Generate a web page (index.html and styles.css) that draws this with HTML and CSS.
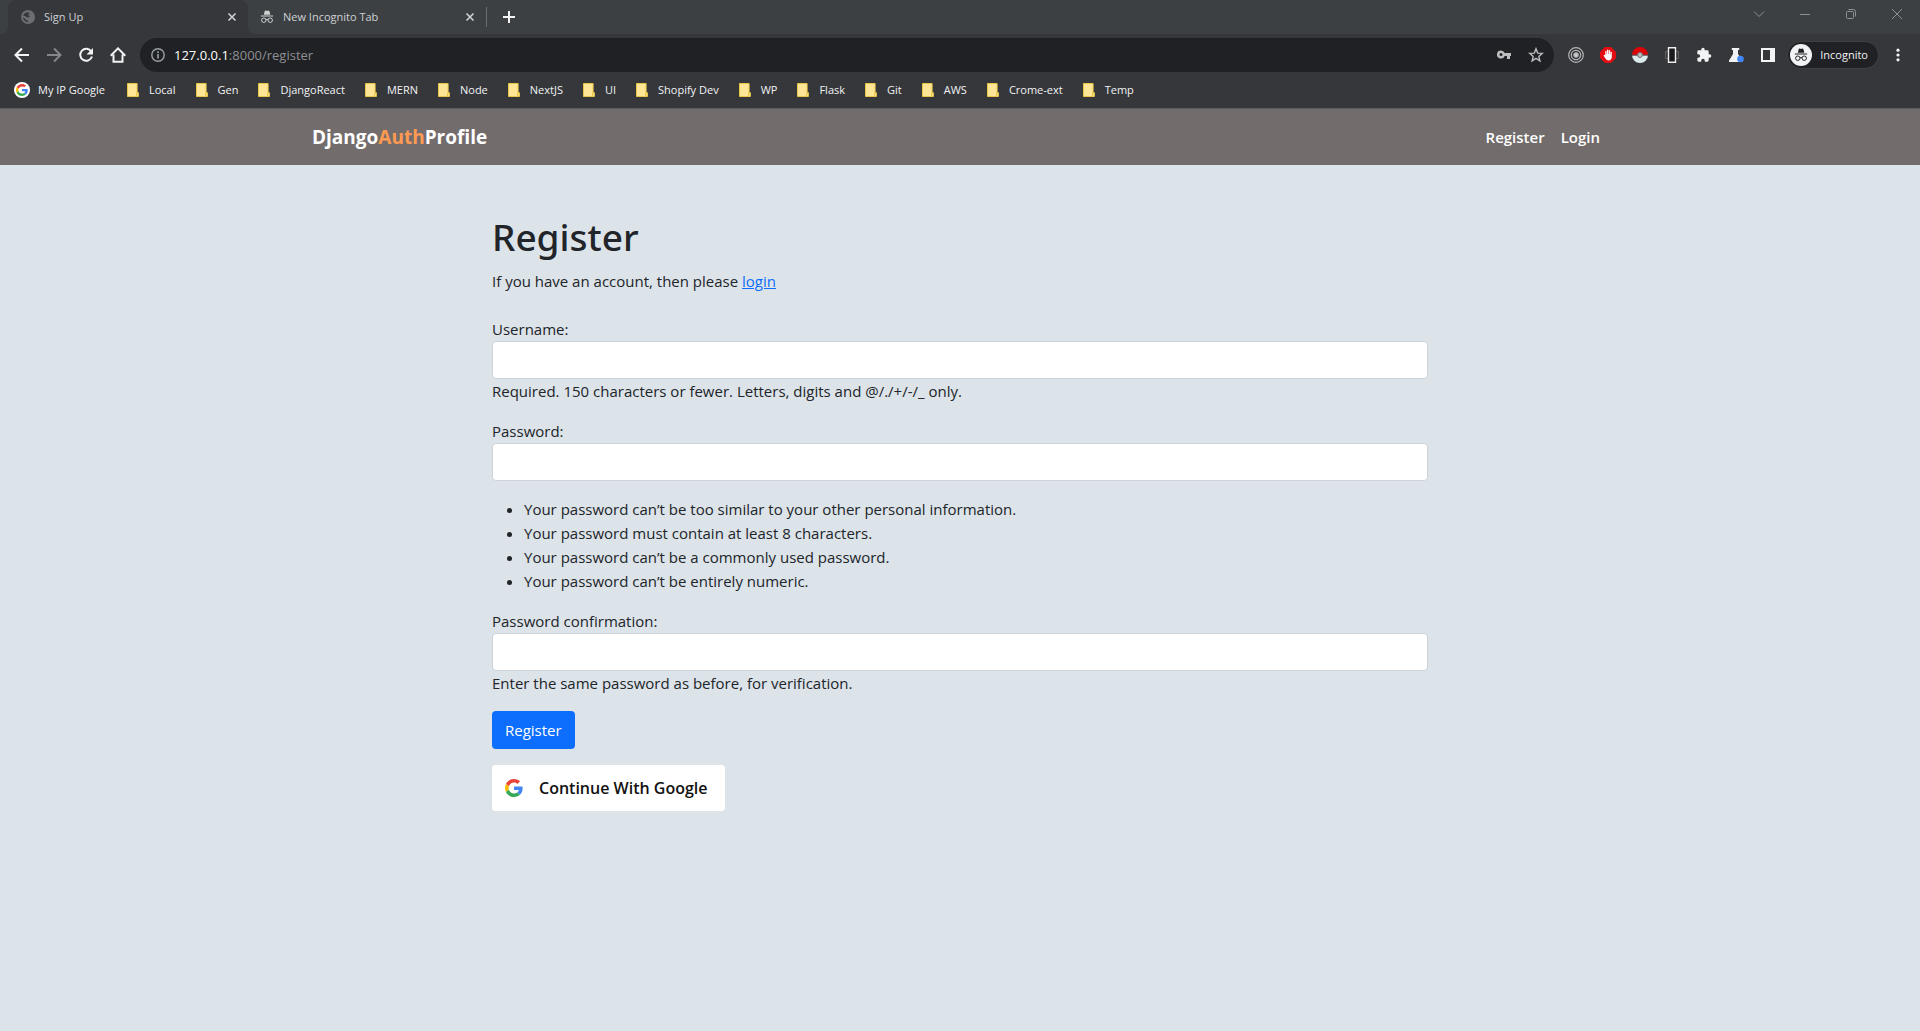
FILE: index.html
```html
<!DOCTYPE html>
<html lang="en">
<head>
<meta charset="utf-8">
<meta name="viewport" content="width=device-width, initial-scale=1">
<title>Sign Up</title>
<link rel="stylesheet" href="styles.css">
</head>
<body>
<svg class="sprite" aria-hidden="true">
  <symbol id="close" viewBox="0 0 10 10"><path d="M1.5 1.5l7 7M8.5 1.5l-7 7" fill="none" stroke="currentColor" stroke-width="1.6"/></symbol>
  <symbol id="folder" viewBox="0 0 12 14"><path d="M.5.5h9.6v9.2h1.3v3.8H.5z" fill="#ffe596" stroke="#e8c648"/><path d="M9.5 13.5v-3.2h2" fill="none" stroke="#e8c648"/></symbol>
  <symbol id="google" viewBox="0 0 48 48"><path fill="#EA4335" d="M24 9.5c3.54 0 6.71 1.22 9.21 3.6l6.85-6.85C35.9 2.38 30.47 0 24 0 14.62 0 6.51 5.38 2.56 13.22l7.98 6.19C12.43 13.72 17.74 9.5 24 9.5z"/><path fill="#4285F4" d="M46.98 24.55c0-1.57-.15-3.09-.38-4.55H24v9.02h12.94c-.58 2.96-2.26 5.48-4.78 7.18l7.73 6c4.51-4.18 7.09-10.36 7.09-17.65z"/><path fill="#FBBC05" d="M10.53 28.59c-.48-1.45-.76-2.99-.76-4.59s.27-3.14.76-4.59l-7.98-6.19C.92 16.46 0 20.12 0 24s.92 7.54 2.56 10.78l7.97-6.19z"/><path fill="#34A853" d="M24 48c6.48 0 11.93-2.13 15.89-5.81l-7.73-6c-2.15 1.45-4.92 2.3-8.16 2.3-6.26 0-11.57-4.22-13.47-9.91l-7.98 6.19C6.51 42.62 14.62 48 24 48z"/></symbol>
  <symbol id="incognito" viewBox="0 0 24 24"><path d="M17.1 5l-1.3-3.3c-.3-.7-1-1-1.700-.8L12 1.500 9.900.900c-.7-.2-1.400.1-1.700.8L6.500 8h11zM1.500 9.500h21v1.800h-21z" fill="currentColor"/><g fill="none" stroke="currentColor" stroke-width="1.700"><circle cx="6.500" cy="17.500" r="3.800"/><circle cx="17.500" cy="17.500" r="3.800"/><path d="M10.200 16.800c1.200-.8 2.400-.8 3.600 0"/></g></symbol>
</svg>

<header class="browser">
  <div class="tabs">
    <div class="tab tab-active">
      <svg class="tab-icon" viewBox="0 0 14 14"><circle cx="7" cy="7" r="7" fill="#6b6e72"/><path d="M6.500 2.200C4.300 2.500 2.500 4 2.200 5.800l2 .2 1.300 1.300h2.700L9 6 7.200 5.200l.6-1.400 1.400-.6zM1.800 7.500c.5 2.500 2.500 4.500 5 4.700l.5-1.700H5.500L4.300 8.700z" fill="#36373b"/></svg>
      <span class="tab-title">Sign Up</span>
      <button class="tab-close" aria-label="Close Sign Up"><svg width="10" height="10"><use href="#close"/></svg></button>
    </div>
    <div class="tab">
      <svg class="tab-icon"><use href="#incognito"/></svg>
      <span class="tab-title">New Incognito Tab</span>
      <button class="tab-close" aria-label="Close New Incognito Tab"><svg width="10" height="10"><use href="#close"/></svg></button>
    </div>
    <span class="tab-divider"></span>
    <button class="new-tab" aria-label="New tab"><svg width="12" height="12" viewBox="0 0 12 12"><path d="M6 0v12M0 6h12" stroke="currentColor" stroke-width="2"/></svg></button>
    <div class="window-controls">
      <button aria-label="Search tabs"><svg width="12" height="12" viewBox="0 0 12 12"><path d="M1 3.500l5 5 5-5"/></svg></button>
      <button aria-label="Minimize"><svg width="12" height="12" viewBox="0 0 12 12"><path d="M1 6.500h10"/></svg></button>
      <button aria-label="Restore"><svg width="12" height="12" viewBox="0 0 12 12"><rect x="1.500" y="3.500" width="7" height="7" rx="1"/><path d="M3.500 1.500h5a2 2 0 0 1 2 2v5"/></svg></button>
      <button aria-label="Close"><svg width="12" height="12" viewBox="0 0 12 12"><path d="M1 1l10 10M11 1L1 11"/></svg></button>
    </div>
  </div>

  <div class="toolbar">
    <button class="tool" aria-label="Back"><svg viewBox="0 0 16 16"><path d="M15 8H2M8 1.500L1.500 8 8 14.500" fill="none" stroke="currentColor" stroke-width="2"/></svg></button>
    <button class="tool tool-dim" aria-label="Forward"><svg viewBox="0 0 16 16"><path d="M1 8h13M8 1.500L14.500 8 8 14.500" fill="none" stroke="currentColor" stroke-width="2"/></svg></button>
    <button class="tool" aria-label="Reload"><svg viewBox="0 0 16 16"><path d="M13.300 4.500A6 6 0 1 0 14 9.500" fill="none" stroke="currentColor" stroke-width="2"/><path d="M15 1v6.500H8.500z" fill="currentColor"/></svg></button>
    <button class="tool" aria-label="Home"><svg viewBox="0 0 16 16"><path d="M3.500 7.500v7.300h9V7.500M.7 8.700L8 1.400l7.300 7.300" fill="none" stroke="currentColor" stroke-width="2"/></svg></button>
    <div class="address">
      <svg class="address-info" viewBox="0 0 14 14"><circle cx="7" cy="7" r="6.200" fill="none" stroke="currentColor" stroke-width="1.400"/><path d="M7 6v4.500M7 3.300v1.600" stroke="currentColor" stroke-width="1.600"/></svg>
      <span class="url"><span class="url-host">127.0.0.1</span>:8000/register</span>
      <button class="tool tool-grey" aria-label="Saved passwords"><svg viewBox="0 0 16 16"><path d="M5 3.500a4 4 0 1 0 3.700 5.400H11V12h3V8.900h1V6.100H8.700A4 4 0 0 0 5 3.500zM5 6a1.500 1.500 0 1 1 0 3 1.500 1.500 0 0 1 0-3z" fill="currentColor" fill-rule="evenodd"/></svg></button>
      <button class="tool tool-grey" aria-label="Bookmark this page"><svg viewBox="0 0 16 16"><path d="M8 1.800l1.700 4.300 4.600.3-3.500 3 1.100 4.500L8 11.400l-3.900 2.500 1.100-4.500-3.500-3 4.600-.3z" fill="none" stroke="currentColor" stroke-width="1.400"/></svg></button>
    </div>
    <button class="tool" aria-label="Recorder"><svg viewBox="0 0 16 16" fill="none" stroke="#b4b5b7" stroke-width="1.200"><circle cx="8" cy="8" r="7.300"/><circle cx="8" cy="8" r="4.700"/><circle cx="8" cy="8" r="2.200" fill="#c8c9ca"/></svg></button>
    <button class="tool" aria-label="Ad blocker"><svg viewBox="0 0 16 16"><path d="M5 0h6l5 5v6l-5 5H5l-5-5V5z" fill="#e40d13"/><path d="M5.300 8.500V4.200q.7-.8 1.300 0V7h.4V2.900q.7-.8 1.400 0V7h.4V3.400q.7-.8 1.400 0v4h.3V5q.7-.7 1.300 0v5q-.4 3.400-3.300 3.400-2.400 0-3.400-2.400L3.500 8.400q.7-1.100 1.800.1z" fill="#fff"/></svg></button>
    <button class="tool" aria-label="Pokeball"><svg viewBox="0 0 16 16"><path d="M0 8a8 8 0 0 1 16 0z" fill="#dd0508"/><path d="M0 8a8 8 0 0 0 16 0z" fill="#dcebed"/><path d="M0 7.500h16v1.200H0z" fill="#5a4040"/><circle cx="8" cy="8" r="2.500" fill="#bbb" stroke="#777"/></svg></button>
    <button class="tool" aria-label="Responsive view"><svg viewBox="0 0 16 16"><path d="M1.500 4.500v7h13v-7z" fill="none" stroke="#606164"/><path d="M4.500.8h7v14.400h-7z" fill="#1b1b1d" stroke="#eee" stroke-width="1.400"/></svg></button>
    <button class="tool" aria-label="Extensions"><svg viewBox="0 0 24 24"><path fill="currentColor" d="M20.500 11H19V7a2 2 0 0 0-2-2h-4V3.500a2.500 2.500 0 0 0-5 0V5H4a2 2 0 0 0-2 2v3.800h1.500a2.700 2.700 0 0 1 0 5.400H2V20a2 2 0 0 0 2 2h3.800v-1.500a2.700 2.700 0 0 1 5.400 0V22H17a2 2 0 0 0 2-2v-4h1.500a2.500 2.500 0 0 0 0-5z"/></svg></button>
    <button class="tool" aria-label="Labs"><svg viewBox="0 0 16 16"><path d="M3.800 1h7.400v2H10v4l4.500 6.500V15H1v-1.500L5 7V3H3.800z" fill="#f1f3f4"/><circle cx="12.500" cy="12" r="3.300" fill="#4285f4"/></svg></button>
    <button class="tool" aria-label="Side panel"><svg viewBox="0 0 16 16"><path d="M1 1h14v14H1zm2 2v10h7V3z" fill="currentColor" fill-rule="evenodd"/></svg></button>
    <button class="profile"><span class="avatar"><svg width="14" height="14"><use href="#incognito"/></svg></span>Incognito</button>
    <button class="tool" aria-label="Menu"><svg viewBox="0 0 16 16"><g fill="currentColor"><circle cx="8" cy="3.200" r="1.600"/><circle cx="8" cy="8" r="1.600"/><circle cx="8" cy="12.800" r="1.600"/></g></svg></button>
  </div>

  <nav class="bookmarks" aria-label="Bookmarks">
    <a class="bookmark bookmark-site" href="#"><span class="site-icon"><svg width="12" height="12"><use href="#google"/></svg></span>My IP Google</a>
    <a class="bookmark" href="#"><svg class="folder"><use href="#folder"/></svg>Local</a>
    <a class="bookmark" href="#"><svg class="folder"><use href="#folder"/></svg>Gen</a>
    <a class="bookmark" href="#"><svg class="folder"><use href="#folder"/></svg>DjangoReact</a>
    <a class="bookmark" href="#"><svg class="folder"><use href="#folder"/></svg>MERN</a>
    <a class="bookmark" href="#"><svg class="folder"><use href="#folder"/></svg>Node</a>
    <a class="bookmark" href="#"><svg class="folder"><use href="#folder"/></svg>NextJS</a>
    <a class="bookmark" href="#"><svg class="folder"><use href="#folder"/></svg>UI</a>
    <a class="bookmark" href="#"><svg class="folder"><use href="#folder"/></svg>Shopify Dev</a>
    <a class="bookmark" href="#"><svg class="folder"><use href="#folder"/></svg>WP</a>
    <a class="bookmark" href="#"><svg class="folder"><use href="#folder"/></svg>Flask</a>
    <a class="bookmark" href="#"><svg class="folder"><use href="#folder"/></svg>Git</a>
    <a class="bookmark" href="#"><svg class="folder"><use href="#folder"/></svg>AWS</a>
    <a class="bookmark" href="#"><svg class="folder"><use href="#folder"/></svg>Crome-ext</a>
    <a class="bookmark" href="#"><svg class="folder"><use href="#folder"/></svg>Temp</a>
  </nav>
</header>

<nav class="navbar" aria-label="Main">
  <div class="container">
    <a class="brand" href="#">Django<span class="brand-accent">Auth</span>Profile</a>
    <div class="nav-links"><a href="#">Register</a><a href="#">Login</a></div>
  </div>
</nav>

<main class="page">
  <h1>Register</h1>
  <p class="intro">If you have an account, then please <a href="#">login</a></p>
  <form>
    <div class="field">
      <label for="username">Username:</label>
      <input id="username" type="text">
      <span>Required. 150 characters or fewer. Letters, digits and @/./+/-/_ only.</span>
    </div>
    <div class="field">
      <label for="password1">Password:</label>
      <input id="password1" type="password">
    </div>
    <ul class="rules">
      <li>Your password can’t be too similar to your other personal information.</li>
      <li>Your password must contain at least 8 characters.</li>
      <li>Your password can’t be a commonly used password.</li>
      <li>Your password can’t be entirely numeric.</li>
    </ul>
    <div class="field">
      <label for="password2">Password confirmation:</label>
      <input id="password2" type="password">
      <span>Enter the same password as before, for verification.</span>
    </div>
    <button class="submit" type="submit">Register</button>
  </form>
  <button class="google" type="button"><svg width="18" height="18"><use href="#google"/></svg>Continue With Google</button>
</main>
</body>
</html>
```
FILE: styles.css
```css
* { box-sizing: border-box; }

body {
  margin: 0;
  min-height: 100vh;
  background: #dce3e9;
  color: #212529;
  font: 15px/24px "Segoe UI", "Open Sans", "Noto Sans", sans-serif;
}

button { margin: 0; padding: 0; border: 0; background: none; color: inherit; font: inherit; }
svg { display: block; flex: none; }
.sprite { position: absolute; width: 0; height: 0; }

/* Browser frame */
.browser {
  background: #36373b;
  color: #f1f3f4;
  border-bottom: 1px solid #5c5d60;
  font-size: 11px;
  line-height: 16px;
}

.tabs { display: flex; height: 34px; padding-left: 8px; background: #3c4043; }
.tab { display: flex; align-items: center; width: 238px; padding: 0 8px 0 12px; color: #cfd1d3; }
.tab-active { position: relative; width: 240px; padding-left: 13px; background: #36373b; border-radius: 8px 8px 0 0; }
.tab-active::before,
.tab-active::after { content: ""; position: absolute; bottom: 0; width: 8px; height: 8px; }
.tab-active::before { right: 100%; background: radial-gradient(circle at 0 0, #3c4043 8px, #36373b 8px); }
.tab-active::after { left: 100%; background: radial-gradient(circle at 100% 0, #3c4043 8px, #36373b 8px); }
.tab-icon { width: 14px; height: 14px; margin-right: 9px; }
.tab-title { flex: 1; }
.tab-close { display: grid; place-items: center; width: 16px; height: 16px; }
.tab-divider { align-self: center; width: 1px; height: 20px; background: #6a6d70; }
.new-tab { display: grid; place-items: center; width: 28px; margin-left: 8px; }
.window-controls { display: flex; margin-left: auto; height: 28px; }
.window-controls button { display: grid; place-items: center; width: 46px; }
.window-controls svg { fill: none; stroke: #8d9093; }

.toolbar { display: flex; align-items: center; height: 42px; padding: 0 6px; }
.tool { display: grid; place-items: center; flex: none; width: 32px; height: 32px; }
.tool svg { width: 16px; height: 16px; }
.tool-dim { color: #84868a; }
.tool-grey { color: #bcbdbf; }
.address {
  display: flex;
  flex: 1;
  align-items: center;
  height: 34px;
  margin: 0 6px;
  padding: 0 2px 0 11px;
  border-radius: 17px;
  background: #202124;
}
.address-info { width: 14px; height: 14px; margin-right: 9px; color: #9aa0a6; }
.url { flex: 1; color: #8d8f93; font-size: 13px; }
.url-host { color: #fff; }
.profile {
  display: flex;
  align-items: center;
  gap: 8px;
  height: 28px;
  margin: 0 3px;
  padding: 0 10px 0 2px;
  border: 1px solid #3f4043;
  border-radius: 14px;
  background: #202124;
}
.avatar { display: grid; place-items: center; width: 22px; height: 22px; border-radius: 50%; background: #f1f3f4; color: #202124; }

.bookmarks { display: flex; align-items: center; gap: 20px; height: 32px; padding: 0 14px 4px; }
.bookmark { display: flex; align-items: center; gap: 10px; color: inherit; text-decoration: none; white-space: nowrap; }
.bookmark-site { gap: 8px; padding-right: 2px; }
.folder { width: 12px; height: 14px; }
.site-icon { display: grid; place-items: center; width: 16px; height: 16px; border-radius: 50%; background: #fff; }

/* Site */
.navbar { background: #736c6c; }
.container { display: flex; align-items: center; justify-content: space-between; max-width: 1320px; min-height: 56px; margin: 0 auto; padding: 0 20px 0 12px; }
.navbar a { color: #fff; text-decoration: none; font-weight: 600; }
.navbar .brand { font-size: 19px; line-height: 28px; font-weight: 700; }
.brand-accent { color: #ff9a52; }
.nav-links { display: flex; gap: 16px; }

.page { max-width: 960px; margin: 0 auto; padding: 48px 12px; }
h1 { margin: 0 0 8px; font-family: "Segoe UI", "Noto Sans", sans-serif; font-size: 37px; line-height: 48px; font-weight: 500; }
.intro { margin: 0 0 24px; }
.intro a { color: #0d6efd; }
.field { display: flex; flex-direction: column; margin-bottom: 16px; }
.field input { width: 100%; height: 38px; padding: 6px 12px; border: 1px solid #ced4da; border-radius: 4px; background: #fff; font: inherit; }
.rules { margin: 0 0 16px; padding-left: 32px; }
.submit { display: block; height: 38px; padding: 0 13px; border-radius: 4px; background: #0d6efd; color: #fff; }
.google { display: flex; align-items: center; gap: 16px; height: 46px; margin-top: 16px; padding: 0 18px 0 13px; border-radius: 4px; background: #fff; color: #111; font-size: 16px; font-weight: 600; }
```
